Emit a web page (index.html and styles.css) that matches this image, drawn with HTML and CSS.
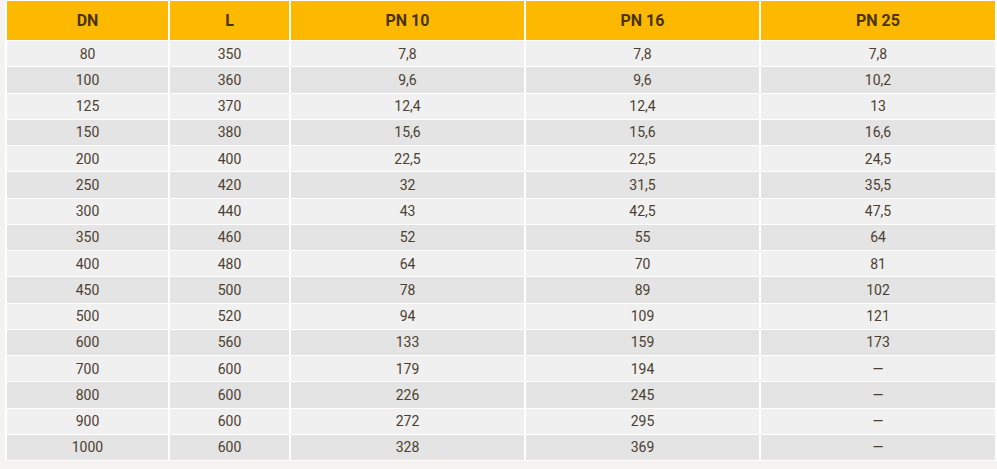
FILE: index.html
```html
<!DOCTYPE html>
<html>
<head>
<meta charset="utf-8">
<link rel="stylesheet" href="styles.css">
</head>
<body>
<table class="spec">
<colgroup>
<col class="c-dn"><col class="c-l"><col class="c-pn"><col class="c-pn"><col class="c-pn25">
</colgroup>
<thead>
<tr><th>DN</th><th>L</th><th>PN 10</th><th>PN 16</th><th>PN 25</th></tr>
</thead>
<tbody>
<tr><td>80</td><td>350</td><td>7,8</td><td>7,8</td><td>7,8</td></tr>
<tr><td>100</td><td>360</td><td>9,6</td><td>9,6</td><td>10,2</td></tr>
<tr><td>125</td><td>370</td><td>12,4</td><td>12,4</td><td>13</td></tr>
<tr><td>150</td><td>380</td><td>15,6</td><td>15,6</td><td>16,6</td></tr>
<tr><td>200</td><td>400</td><td>22,5</td><td>22,5</td><td>24,5</td></tr>
<tr><td>250</td><td>420</td><td>32</td><td>31,5</td><td>35,5</td></tr>
<tr><td>300</td><td>440</td><td>43</td><td>42,5</td><td>47,5</td></tr>
<tr><td>350</td><td>460</td><td>52</td><td>55</td><td>64</td></tr>
<tr><td>400</td><td>480</td><td>64</td><td>70</td><td>81</td></tr>
<tr><td>450</td><td>500</td><td>78</td><td>89</td><td>102</td></tr>
<tr><td>500</td><td>520</td><td>94</td><td>109</td><td>121</td></tr>
<tr><td>600</td><td>560</td><td>133</td><td>159</td><td>173</td></tr>
<tr><td>700</td><td>600</td><td>179</td><td>194</td><td>—</td></tr>
<tr><td>800</td><td>600</td><td>226</td><td>245</td><td>—</td></tr>
<tr><td>900</td><td>600</td><td>272</td><td>295</td><td>—</td></tr>
<tr><td>1000</td><td>600</td><td>328</td><td>369</td><td>—</td></tr>
</tbody>
</table>
</body>
</html>
```
FILE: styles.css
```css
html, body {
  margin: 0;
  padding: 0;
  background: #f4f3f1;
}
body {
  padding-left: 5px;
  font-family: Roboto, "Liberation Sans", sans-serif;
}
.spec {
  border-collapse: separate;
  border-spacing: 2px 1px;
  background: #ffffff;
  table-layout: fixed;
  width: 992px;
}
.c-dn { width: 161px; }
.c-l { width: 119px; }
.c-pn { width: 233px; }
.c-pn25 { width: 234px; }
.spec th {
  background: #fcb900;
  color: #4a3300;
  font-weight: 700;
  font-size: 16px;
  height: 39px;
  padding: 0;
  text-align: center;
  vertical-align: middle;
}
.spec td {
  height: 25.25px;
  padding: 0;
  text-align: center;
  vertical-align: middle;
  font-size: 14px;
  color: #4b4030;
}
.spec tbody tr:nth-child(odd) td { background: #f0f0f0; }
.spec tbody tr:nth-child(even) td { background: #e4e4e4; }
```
